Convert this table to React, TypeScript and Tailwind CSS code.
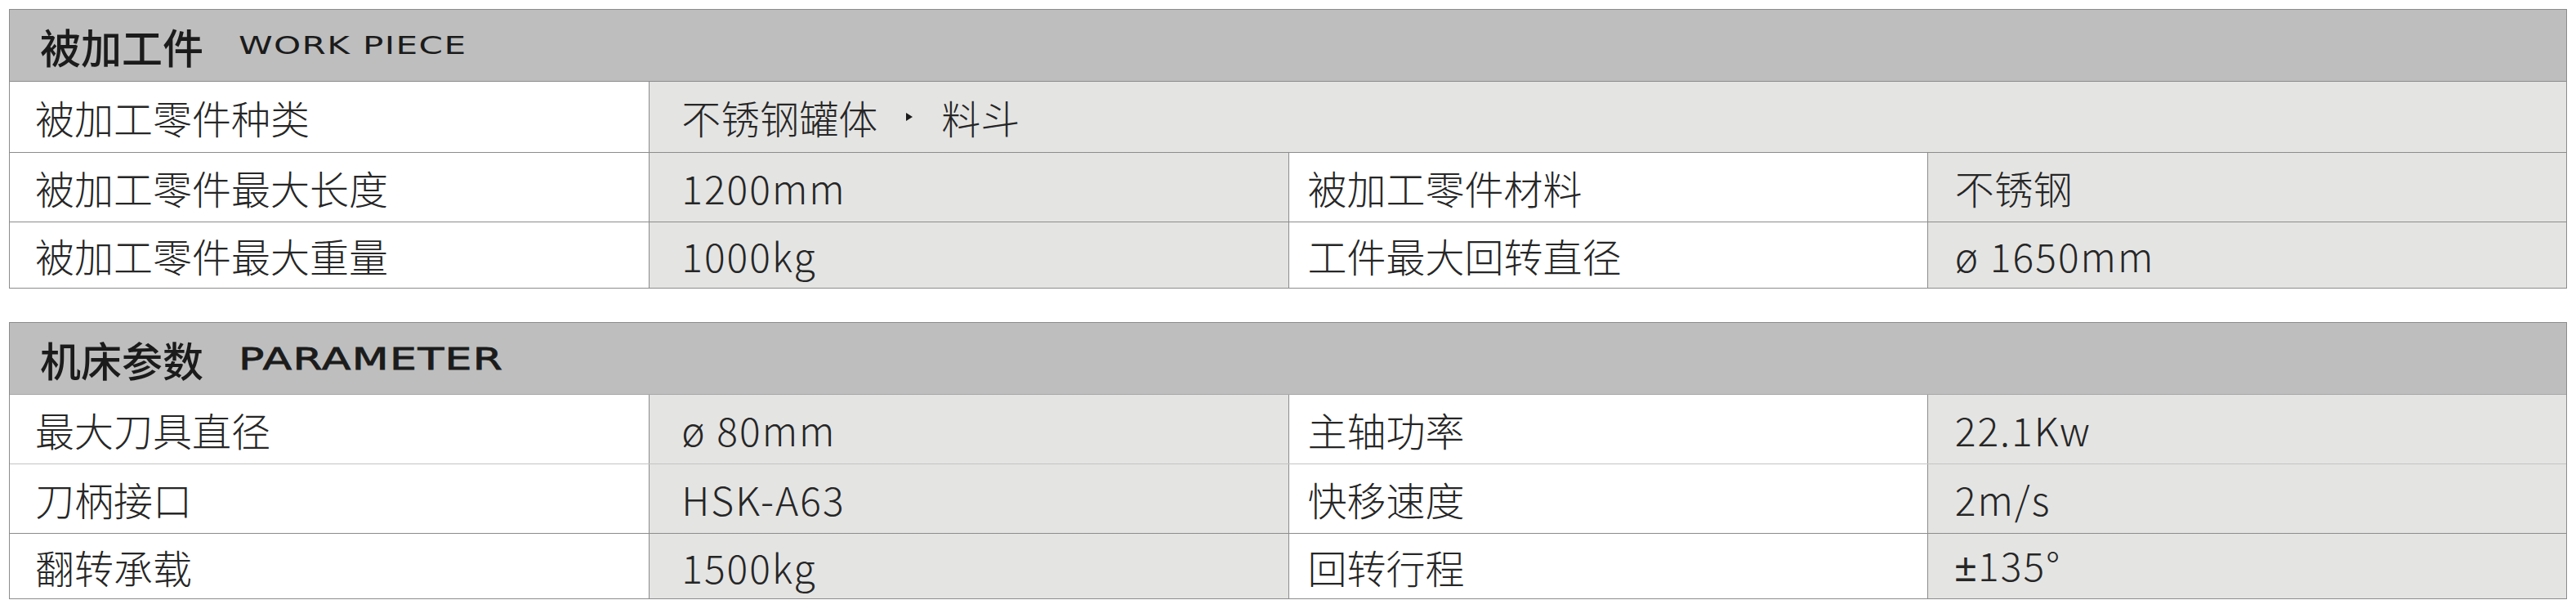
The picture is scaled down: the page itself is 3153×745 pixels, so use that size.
const cjk = "font-['Noto_Sans_CJK_SC','Noto_Sans',sans-serif]";

type Cell = { text: React.ReactNode; kind: "label" | "value"; span?: number; pl: string };

type Row = { h: string; line: string; cells: Cell[] };

interface SpecTableProps {
  zh: string;
  en: string;
  enClass: string;
  headerH: string;
  rows: Row[];
}

function SpecTable({ zh, en, enClass, headerH, rows }: SpecTableProps) {
  return (
    <section className={`border border-[#8c8c8c] ${cjk} text-[#1b1b1b]`}>
      <div className={`${headerH} flex items-center bg-[#bebebe] pl-[37px]`}>
        <span className="text-[50px] font-medium leading-none">{zh}</span>
        <span className={`ml-[43px] origin-left font-['DejaVu_Sans',sans-serif] leading-none ${enClass}`}>
          {en}
        </span>
      </div>
      {rows.map((row, i) => (
        <div key={i} className={`grid grid-cols-4 border-t ${row.line} ${row.h}`}>
          {row.cells.map((cell, j) => (
            <div
              key={j}
              className={[
                "flex items-center text-[48px] font-light leading-none text-[#262626]",
                cell.span === 3 ? "col-span-3" : "",
                j > 0 ? "border-l border-[#8c8c8c]" : "",
                cell.kind === "value" ? "bg-[#e4e4e3]" : "bg-white",
                cell.pl,
              ].join(" ")}
            >
              {cell.text}
            </div>
          ))}
        </div>
      ))}
    </section>
  );
}

const label = (text: string, first = true): Cell => ({
  text,
  kind: "label",
  pl: first ? "pl-[31px]" : "pl-[23px]",
});

const value = (text: React.ReactNode, last = false, span?: number): Cell => ({
  text,
  kind: "value",
  span,
  pl: last ? "pl-[33px]" : "pl-[39px]",
});

const num = (text: string) => <span className="tracking-[2px]">{text}</span>;

const workRows: Row[] = [
  {
    h: "h-[87px]",
    line: "border-[#8c8c8c]",
    cells: [
      label("被加工零件种类"),
      value(
        <span className="flex items-center">
          不锈钢罐体
          <svg className="mx-[34px]" width="10" height="12" viewBox="0 0 10 12">
            <path d="M1 1 L9 6 L1 11 Z" fill="#1b1b1b" />
          </svg>
          料斗
        </span>,
        false,
        3,
      ),
    ],
  },
  {
    h: "h-[85px]",
    line: "border-[#8c8c8c]",
    cells: [label("被加工零件最大长度"), value(num("1200mm")), label("被加工零件材料", false), value("不锈钢", true)],
  },
  {
    h: "h-[81px]",
    line: "border-[#8c8c8c]",
    cells: [label("被加工零件最大重量"), value(num("1000kg")), label("工件最大回转直径", false), value(num("ø 1650mm"), true)],
  },
];

const paramRows: Row[] = [
  {
    h: "h-[85px]",
    line: "border-[#a8a8a8]",
    cells: [label("最大刀具直径"), value(num("ø 80mm")), label("主轴功率", false), value(num("22.1Kw"), true)],
  },
  {
    h: "h-[85px]",
    line: "border-[#c4c4c4]",
    cells: [label("刀柄接口"), value(num("HSK-A63")), label("快移速度", false), value(num("2m/s"), true)],
  },
  {
    h: "h-[80px]",
    line: "border-[#8c8c8c]",
    cells: [
      label("翻转承载"),
      value(num("1500kg")),
      label("回转行程", false),
      value(
        <span className="tracking-[2px]">
          <span className="font-['Liberation_Sans',sans-serif] font-normal">±</span>135°
        </span>,
        true,
      ),
    ],
  },
];

export default function App() {
  return (
    <div className="min-h-screen bg-white px-[11px] pt-[11px]">
      <SpecTable
        zh="被加工件"
        en="WORK PIECE"
        enClass="text-[31px] scale-x-[1.36] tracking-[1px]"
        headerH="h-[87px]"
        rows={workRows}
      />
      <div className="mt-[41px]">
        <SpecTable
          zh="机床参数"
          en="PARAMETER"
          enClass="text-[38px] font-normal scale-x-[1.37] tracking-[1px] [-webkit-text-stroke:0.8px_#1b1b1b]"
          headerH="h-[87px]"
          rows={paramRows}
        />
      </div>
    </div>
  );
}
